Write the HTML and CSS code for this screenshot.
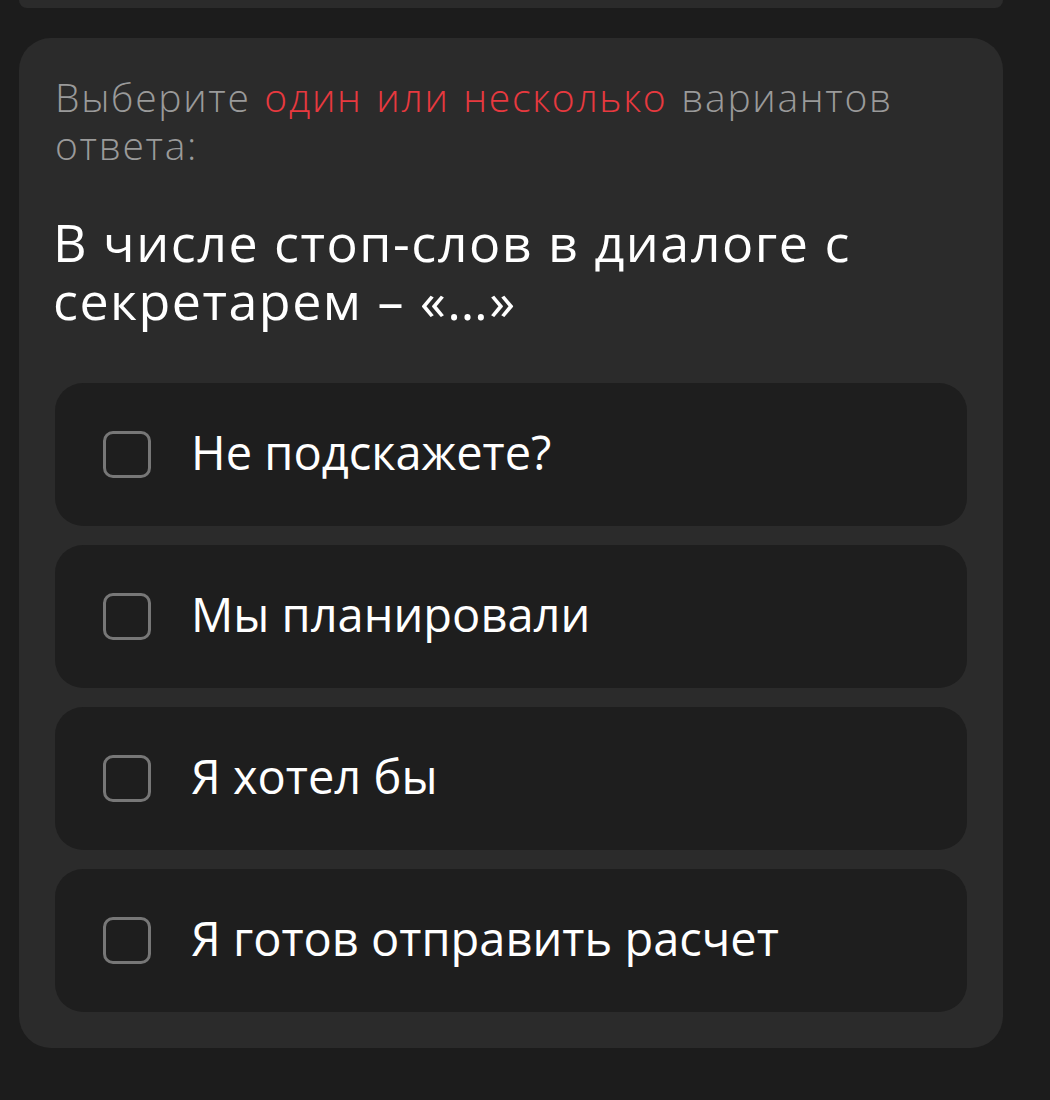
FILE: index.html
```html
<!DOCTYPE html>
<html lang="ru">
<head>
  <meta charset="UTF-8">
  <title>Вопрос</title>
  <link rel="stylesheet" href="styles.css">
</head>
<body>
  <div class="card card-prev"></div>

  <div class="card question">
    <p class="hint">Выберите <span class="accent">один или несколько</span> вариантов ответа:</p>
    <h2 class="title">В числе стоп-слов в диалоге с секретарем – «…»</h2>

    <ul class="options">
      <li class="option"><span class="check"></span><span class="label">Не подскажете?</span></li>
      <li class="option"><span class="check"></span><span class="label">Мы планировали</span></li>
      <li class="option"><span class="check"></span><span class="label">Я хотел бы</span></li>
      <li class="option"><span class="check"></span><span class="label">Я готов отправить расчет</span></li>
    </ul>
  </div>
</body>
</html>
```

FILE: styles.css
```css
body {
  margin: 0;
  padding: 0;
  background-color: #1c1c1c;
  font-family: "Open Sans", "Noto Sans", sans-serif;
  color: #fff;
}

.card {
  margin: 0 47px 0 19px;
  background-color: #2b2b2b;
  border-radius: 32px;
}

.card-prev {
  height: 8px;
  border-radius: 0 0 32px 32px;
  margin-bottom: 30px;
}

.question {
  padding: 35px 36px 36px 36px;
}

.hint {
  margin: 0;
  font-size: 39px;
  line-height: 48px;
  font-weight: 300;
  word-spacing: 2px;
  letter-spacing: 1.7px;
  color: #9a9a9a;
}

.accent {
  color: #e8393f;
}

.title {
  margin: 44px 0 54px -2px;
  font-size: 52px;
  line-height: 58px;
  font-weight: 500;
  letter-spacing: 1.5px;
  color: #fff;
}

.options {
  list-style-type: none;
  margin: 0;
  padding: 0;
  display: flex;
  flex-direction: column;
  gap: 19px;
}

.option {
  display: flex;
  align-items: center;
  height: 143px;
  padding-left: 48px;
  background-color: #1e1e1e;
  border-radius: 28px;
  font-size: 47px;
  font-weight: 400;
  color: #fff;
}

.check {
  box-sizing: border-box;
  width: 48px;
  height: 47px;
  margin-right: 40px;
  border: 3.5px solid #777;
  border-radius: 10px;
  flex-shrink: 0;
}

.label {
  margin-bottom: 6px;
}
```
